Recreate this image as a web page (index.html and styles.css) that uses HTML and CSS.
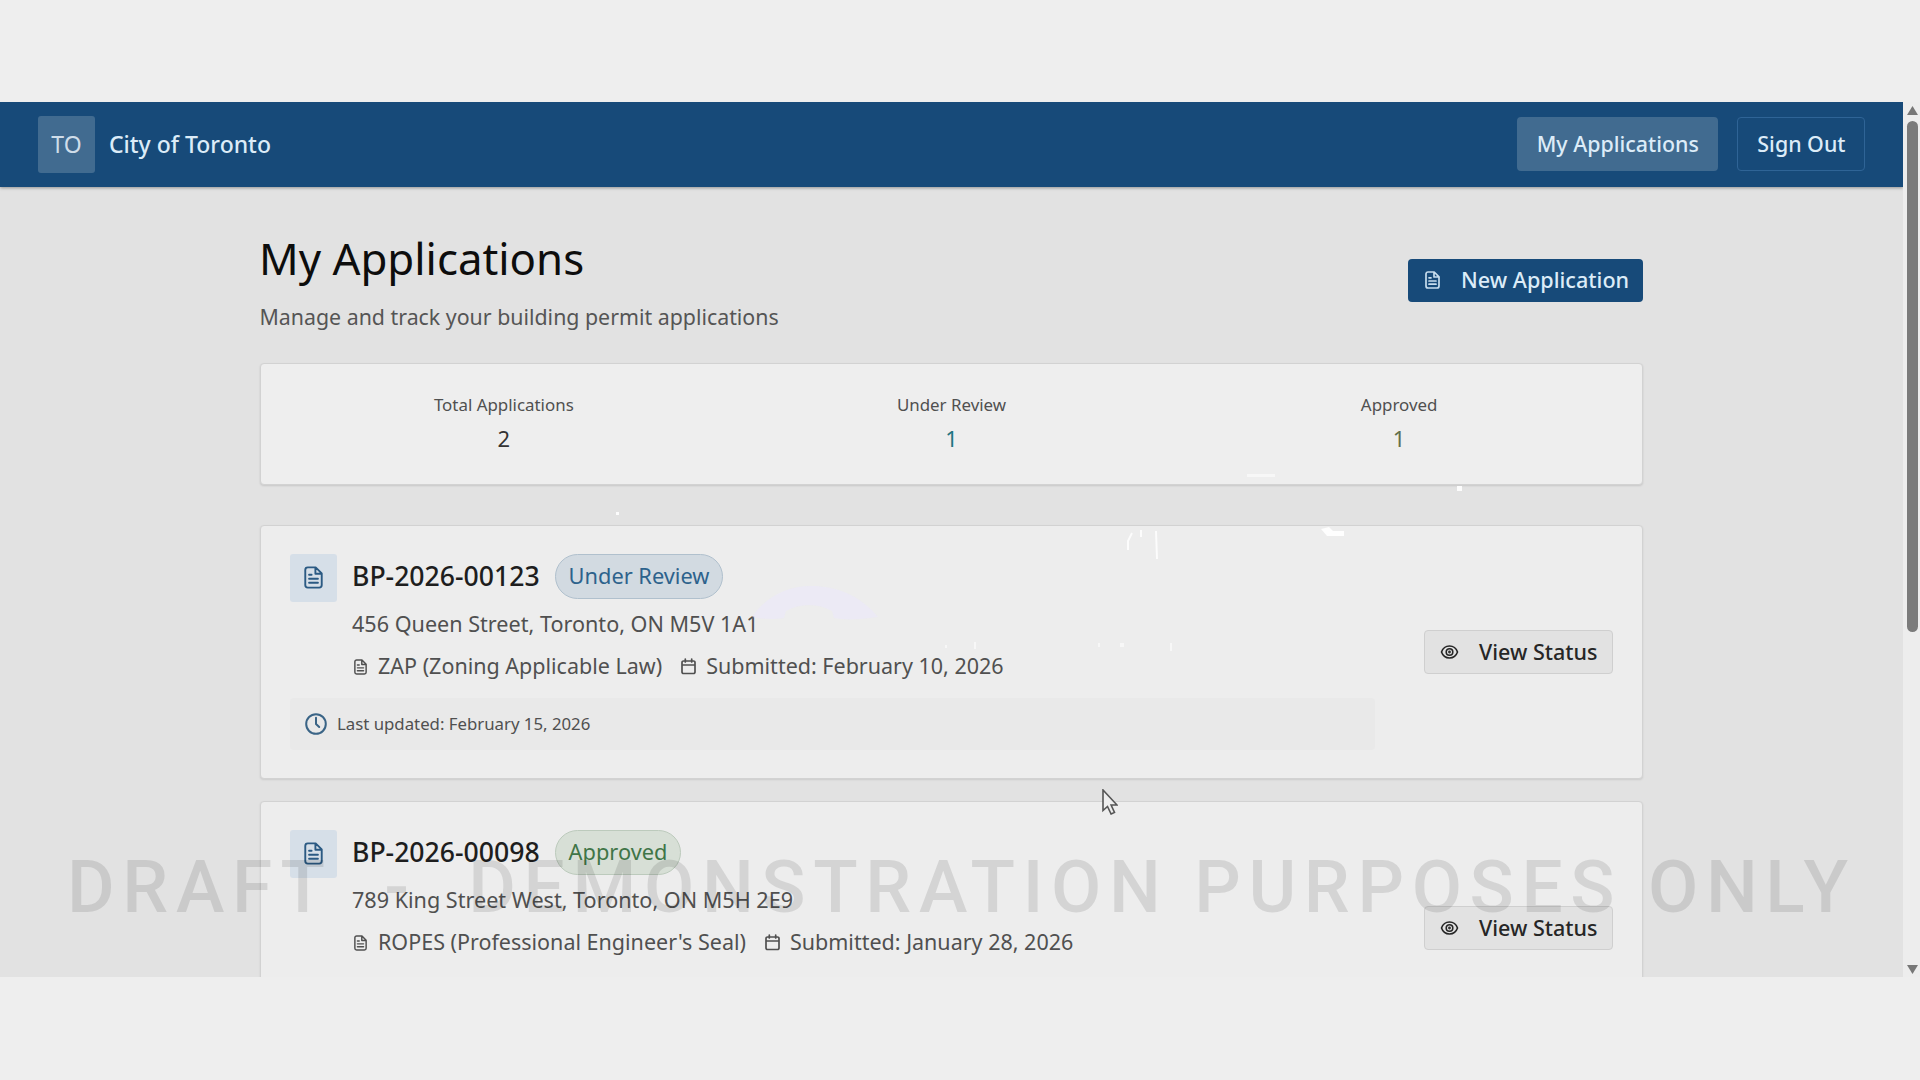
FILE: index.html
```html
<!DOCTYPE html>
<html lang="en">
<head>
<meta charset="utf-8">
<title>My Applications - City of Toronto</title>
<link rel="stylesheet" href="styles.css">
</head>
<body>
<svg class="sprite" aria-hidden="true">
  <symbol id="doc" viewBox="0 0 15 18"><path d="M3 1h6.2L14 5.8V15a2 2 0 0 1-2 2H3a2 2 0 0 1-2-2V3a2 2 0 0 1 2-2zM9 1v5h5M4 6.8h2M4 10h7M4 13.2h7"/></symbol>
  <symbol id="calendar" viewBox="0 0 15 17"><path d="M2.5 3h10A1.5 1.5 0 0 1 14 4.500V14a1.500 1.500 0 0 1-1.500 1.500h-10A1.500 1.500 0 0 1 1 14V4.500A1.500 1.500 0 0 1 2.500 3zM1 7h13M4.300 1v3M10.700 1v3"/></symbol>
  <symbol id="eye" viewBox="0 0 18 14"><path d="M1 7c1.300-3.700 4.300-6 8-6s6.700 2.300 8 6c-1.300 3.700-4.300 6-8 6S2.300 10.700 1 7z"/><circle cx="9" cy="7" r="3.300"/><circle cx="9" cy="7" r=".6"/></symbol>
  <symbol id="clock" viewBox="0 0 22 22"><circle cx="11" cy="11" r="9.800"/><path d="M11 4.800V11l3.200 3"/></symbol>
</svg>
<div class="viewport">
  <div class="page">
    <header class="header">
      <div class="logo">TO</div>
      <div class="brand">City of Toronto</div>
      <nav class="nav">
        <a class="nav-link active">My Applications</a>
        <a class="nav-link outlined">Sign Out</a>
      </nav>
    </header>
    <main class="main">
      <div class="heading">
        <div>
          <h1 class="title">My Applications</h1>
          <p class="subtitle">Manage and track your building permit applications</p>
        </div>
        <a class="button primary"><svg class="icon doc"><use href="#doc"/></svg>New Application</a>
      </div>
      <section class="stats">
        <div class="stat"><div class="stat-label">Total Applications</div><div class="stat-value">2</div></div>
        <div class="stat"><div class="stat-label">Under Review</div><div class="stat-value review">1</div></div>
        <div class="stat"><div class="stat-label">Approved</div><div class="stat-value approved">1</div></div>
      </section>
      <section class="list">
        <article class="card">
          <div class="card-body">
            <div class="card-top">
              <div class="tile"><svg class="icon tile-icon"><use href="#doc"/></svg></div>
              <div>
                <div class="permit"><h2 class="permit-id">BP-2026-00123</h2><span class="badge review">Under Review</span></div>
                <p class="address">456 Queen Street, Toronto, ON M5V 1A1</p>
                <div class="meta">
                  <svg class="icon meta-doc"><use href="#doc"/></svg><span class="kind">ZAP (Zoning Applicable Law)</span>
                  <svg class="icon meta-cal"><use href="#calendar"/></svg><span>Submitted: February 10, 2026</span>
                </div>
              </div>
            </div>
            <div class="updated"><svg class="icon clock"><use href="#clock"/></svg>Last updated: February 15, 2026</div>
          </div>
          <a class="button secondary"><svg class="icon eye"><use href="#eye"/></svg>View Status</a>
        </article>
        <article class="card">
          <div class="card-body">
            <div class="card-top">
              <div class="tile"><svg class="icon tile-icon"><use href="#doc"/></svg></div>
              <div>
                <div class="permit"><h2 class="permit-id">BP-2026-00098</h2><span class="badge approved">Approved</span></div>
                <p class="address">789 King Street West, Toronto, ON M5H 2E9</p>
                <div class="meta">
                  <svg class="icon meta-doc"><use href="#doc"/></svg><span class="kind">ROPES (Professional Engineer's Seal)</span>
                  <svg class="icon meta-cal"><use href="#calendar"/></svg><span>Submitted: January 28, 2026</span>
                </div>
              </div>
            </div>
            <div class="updated blank"></div>
          </div>
          <a class="button secondary"><svg class="icon eye"><use href="#eye"/></svg>View Status</a>
        </article>
      </section>
    </main>
  </div>
  <div class="scrollbar">
    <svg class="arrow" viewBox="0 0 11 9"><path d="M5.500 0 11 9H0z"/></svg>
    <div class="thumb"></div>
    <svg class="arrow down" viewBox="0 0 11 9"><path d="M0 0h11L5.500 9z"/></svg>
  </div>
</div>
<svg class="glints" viewBox="0 0 1920 1080" aria-hidden="true">
  <path class="arc" d="M752 617c14-20 34-31 59-31s49 9 67 31c-20 3-35 3-44 1l-2-7c-14-8-32-8-46 0l-2 7c-12 2-22 1-32-1z"/>
  <path class="streak" d="M1128 550v-9l4-8M1156 531l1 28M1141 530v7"/>
  <path class="spark" d="M1321 529l8-2 4 4h11v5h-17zM1457 486h5v5h-5zM616 512h3v3h-3z"/>
  <path class="haze" d="M1247 474h28v3h-28zM945 645h2v3h-2zM974 642h2v7h-2zM1098 643h2v4h-2zM1120 643h4v4h-4zM1170 643h2v8h-2z"/>
</svg>
<div class="watermark">DRAFT&nbsp; -&nbsp; DEMONSTRATION PURPOSES ONLY</div>
<svg class="cursor" viewBox="0 0 16 26"><path d="M1 1v20.500l4.500-4 3.600 7.500 3.400-1.600-3.400-7.400H15z"/></svg>
</body>
</html>
```
FILE: styles.css
```css
* { box-sizing: border-box; }
body {
  margin: 0;
  height: 1080px;
  overflow: hidden;
  padding-top: 102px;
  background: #eeeeee;
  font-family: "Noto Sans", "Open Sans", sans-serif;
  color: #505050;
}
h1, h2, p { margin: 0; }
.sprite { position: absolute; width: 0; height: 0; }
.icon { display: block; flex: none; fill: none; stroke: currentColor; stroke-width: 1.7; stroke-linejoin: round; stroke-linecap: round; overflow: visible; }

.viewport { display: flex; height: 875px; overflow: hidden; }
.page { width: 1903px; background: #e2e2e2; }
.header {
  display: flex;
  align-items: center;
  height: 85px;
  padding: 0 38px 1px;
  background: #174a79;
  box-shadow: 0 1px 3px rgba(0, 0, 0, .35);
  color: #dcecf8;
}
.logo {
  width: 57px;
  height: 57px;
  border-radius: 3px;
  background: #416b90;
  font-size: 23px;
  line-height: 56px;
  text-align: center;
  color: #cfdde9;
}
.brand { margin: -1px 0 0 14px; font-size: 23px; font-weight: 500; }
.nav { display: flex; gap: 19px; margin-left: auto; }
.nav-link {
  height: 54px;
  border: 1px solid transparent;
  border-radius: 4px;
  padding: 0 18.500px 0 19px;
  font-size: 21.400px;
  font-weight: 500;
  line-height: 51px;
}
.nav-link.active { background: #416b90; }
.nav-link.outlined { border-color: #2f6496; }

.main { width: 1383px; margin: 0 auto; padding-top: 45px; }
.heading { display: flex; justify-content: space-between; align-items: center; }
.title { font-size: 43.800px; font-weight: 400; line-height: 52px; color: #0d0d0d; margin-left: -1px; }
.subtitle { margin-top: 18px; font-size: 21.350px; line-height: 30px; color: #555; margin-left: -.5px; }
.button {
  display: flex;
  align-items: center;
  flex: none;
  height: 43px;
  border-radius: 4px;
  font-size: 21.600px;
  font-weight: 500;
}
.button.primary { width: 235px; padding: 0 0 1px 17px; background: #174a79; color: #dcecf8; margin-bottom: 4px; }
.icon.doc { width: 15px; height: 18px; margin-right: 21px; color: #c7ddee; }
.button.secondary { width: 189px; height: 44px; padding: 0 0 1px 15px; border: 1px solid #cfcfcf; background: #e2e2e2; color: #262626; font-size: 21.500px; }
.icon.eye { width: 19px; height: 14px; margin-right: 20px; stroke-width: 1.6; }

.stats {
  display: grid;
  grid-template-columns: repeat(3, 1fr);
  gap: 20px;
  height: 122px;
  margin-top: 31px;
  padding: 29px;
  border: 1px solid #d2d2d2;
  border-radius: 4px;
  background: #eeeeee;
  box-shadow: 0 1px 2px rgba(0, 0, 0, .12);
  text-align: center;
}
.stat-label { font-size: 16.900px; line-height: 24px; }
.stat-value { margin-top: 4px; font-size: 22px; line-height: 34px; color: #333; }
.stat-value.review { color: #217481; }
.stat-value.approved { color: #61704c; }

.list { display: flex; flex-direction: column; gap: 22px; margin-top: 40px; }
.card {
  display: flex;
  align-items: center;
  gap: 49px;
  height: 254px;
  padding: 0 29px;
  border: 1px solid #d2d2d2;
  border-radius: 4px;
  background: #ededed;
  box-shadow: 0 1px 2px rgba(0, 0, 0, .1);
}
.card-body { flex: 1; }
.card-top { display: flex; gap: 15px; margin-top: -1px; }
.tile { display: grid; place-items: center; width: 47px; height: 48px; border-radius: 3px; background: #d6dfe8; }
.tile-icon { width: 19px; height: 23px; color: #2b5a83; stroke-width: 1.5; }
.permit { display: flex; align-items: center; gap: 15px; height: 45px; }
.permit-id { font-size: 26.600px; font-weight: 500; line-height: 36px; color: #1e1e1e; }
.badge { height: 45px; padding: 0 13px; border: 1px solid; border-radius: 23px; font-size: 21.800px; line-height: 41px; }
.badge.review { background: #d2dae1; border-color: #b0c0cd; color: #2d628c; }
.badge.approved { background: #d7dfd6; border-color: #bccabc; color: #407547; }
.address { margin-top: 10px; font-size: 21.600px; line-height: 29px; }
.meta { display: flex; align-items: center; margin-top: 13px; font-size: 21.500px; line-height: 30px; }
.meta-doc { width: 13px; height: 16px; margin: 2px 11px 0 2px; }
.kind { margin-right: 19px; }
.meta-cal { width: 15px; height: 17px; margin: 2px 10px 0 0; }
.updated {
  display: flex;
  align-items: center;
  gap: 10px;
  height: 52px;
  margin-top: 17px;
  padding-left: 15px;
  border-radius: 4px;
  background: #e9e9e9;
  font-size: 16.800px;
}
.updated.blank { background: none; }
.clock { width: 22px; height: 22px; color: #3a6486; stroke-width: 2; }

.scrollbar { display: flex; flex-direction: column; align-items: center; width: 17px; padding: 4px 1px 2px 3px; background: #ededed; }
.arrow { width: 11px; height: 9px; fill: #777; }
.arrow.down { margin-top: auto; margin-bottom: 1px; }
.thumb { width: 11px; height: 511px; margin-top: 6px; border-radius: 6px; background: #7b7b7b; }

.glints { position: absolute; left: 0; top: 0; width: 1920px; height: 1080px; pointer-events: none; }
.arc { fill: #ebe8f8; opacity: .7; }
.streak { fill: none; stroke: #fff; stroke-width: 2; opacity: .8; }
.spark { fill: #fff; opacity: .9; }
.haze { fill: #fff; opacity: .55; }
.watermark {
  position: absolute;
  left: 67px;
  top: 844px;
  font: 500 73px/86px Roboto, sans-serif;
  letter-spacing: 7.650px;
  white-space: nowrap;
  color: rgba(0, 0, 0, .105);
  pointer-events: none;
}
.cursor { position: absolute; left: 1102px; top: 789px; width: 16px; height: 26px; fill: #eee; stroke: #555; stroke-width: 1.600; }
```
